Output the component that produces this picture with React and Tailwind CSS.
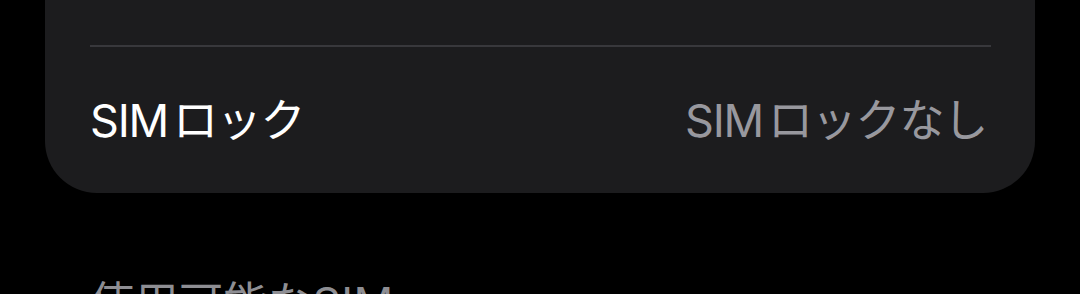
import React from 'react';

const font = { fontFamily: 'Inter, "Noto Sans CJK JP", sans-serif' };

export default function App() {
  return (
    <div className="w-[1080px] h-[294px] bg-black overflow-hidden" style={font}>
      {/* Card */}
      <div className="mx-[45px] bg-[#1c1c1e] rounded-b-[52px]">
        <div className="h-[45px]" />
        <div className="ml-[45px] mr-[44px] h-[2px] bg-[#38383c]" />
        <div className="flex items-center justify-between pl-[45px] pr-[48px] h-[146px] text-[45px] leading-none">
          <span className="text-white tracking-[-1.2px]">
            <span className="mr-[5px]">SIM</span>ロック
          </span>
          <span className="text-[#98989e] tracking-[-1.2px]">
            <span className="mr-[5px]">SIM</span>ロックなし
          </span>
        </div>
      </div>
      {/* Section header */}
      <div className="pl-[90px] pt-[88px] text-[44px] leading-none text-[#8e8e93] tracking-[0.5px]">
        使用可能なSIM
      </div>
    </div>
  );
}
